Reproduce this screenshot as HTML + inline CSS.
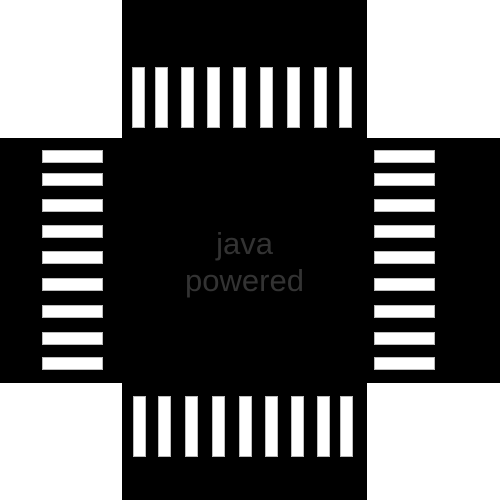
<!DOCTYPE html>
<html><head><meta charset="utf-8"><style>
html,body{margin:0;padding:0;width:500px;height:500px;background:#fff;overflow:hidden;position:relative}
div{position:absolute}
.k{background:#000}
.v{width:13px;height:61px;background:#fff;border:1px solid #bbb;box-sizing:border-box}
.h{width:61px;height:13px;background:#fff;border:1px solid #bbb;box-sizing:border-box}
.t{left:0;width:489px;text-align:center;color:#333;font-family:"Liberation Sans",sans-serif;font-size:31px;line-height:31px}
</style></head><body>
<div class="k" style="left:122px;top:0;width:245px;height:500px"></div>
<div class="k" style="left:0;top:138px;width:500px;height:245px"></div>

<div class="v" style="left:132px;top:67px"></div>
<div class="v" style="left:155px;top:67px"></div>
<div class="v" style="left:181px;top:67px"></div>
<div class="v" style="left:207px;top:67px"></div>
<div class="v" style="left:233px;top:67px"></div>
<div class="v" style="left:260px;top:67px"></div>
<div class="v" style="left:287px;top:67px"></div>
<div class="v" style="left:314px;top:67px"></div>
<div class="v" style="left:339px;top:67px"></div>

<div class="v" style="left:133px;top:396px"></div>
<div class="v" style="left:158px;top:396px"></div>
<div class="v" style="left:185px;top:396px"></div>
<div class="v" style="left:212px;top:396px"></div>
<div class="v" style="left:239px;top:396px"></div>
<div class="v" style="left:265px;top:396px"></div>
<div class="v" style="left:291px;top:396px"></div>
<div class="v" style="left:317px;top:396px"></div>
<div class="v" style="left:340px;top:396px"></div>

<div class="h" style="left:42px;top:150px"></div>
<div class="h" style="left:42px;top:173px"></div>
<div class="h" style="left:42px;top:199px"></div>
<div class="h" style="left:42px;top:225px"></div>
<div class="h" style="left:42px;top:251px"></div>
<div class="h" style="left:42px;top:278px"></div>
<div class="h" style="left:42px;top:305px"></div>
<div class="h" style="left:42px;top:332px"></div>
<div class="h" style="left:42px;top:357px"></div>

<div class="h" style="left:374px;top:150px"></div>
<div class="h" style="left:374px;top:173px"></div>
<div class="h" style="left:374px;top:199px"></div>
<div class="h" style="left:374px;top:225px"></div>
<div class="h" style="left:374px;top:251px"></div>
<div class="h" style="left:374px;top:278px"></div>
<div class="h" style="left:374px;top:305px"></div>
<div class="h" style="left:374px;top:332px"></div>
<div class="h" style="left:374px;top:357px"></div>

<div class="t" style="top:228px">java</div>
<div class="t" style="top:265px">powered</div>
</body></html>
